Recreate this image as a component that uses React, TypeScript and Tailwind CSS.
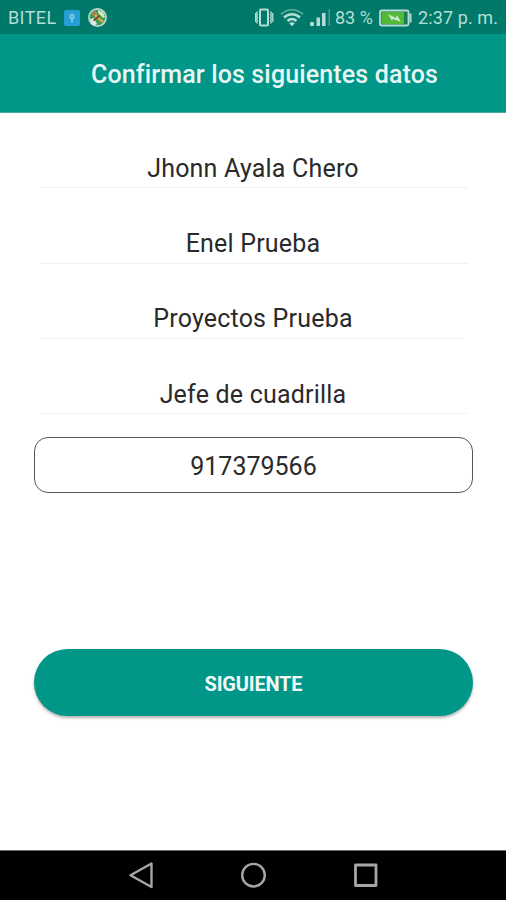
import React from 'react';

const details = [
  { id: 'name', value: 'Jhonn Ayala Chero', line: 'w-[428px]' },
  { id: 'company', value: 'Enel Prueba', line: 'w-[428px]' },
  { id: 'project', value: 'Proyectos Prueba', line: 'w-[424px]' },
  { id: 'role', value: 'Jefe de cuadrilla', line: 'w-[428px]' },
];

const StatusBar = () => (
  <div className="flex h-[34px] shrink-0 items-center bg-[#00796a] pl-2 pr-[7px] pt-px text-[18px] text-[#b5ddd5]">
    <span className="w-[56px] shrink-0 tracking-[0.4px]">BITEL</span>
    <svg className="h-4 w-4 shrink-0" viewBox="0 0 16 16" fill="none">
      <rect width="16" height="16" rx="2" fill="#249ed2" />
      <circle cx="8" cy="6.5" r="2.3" fill="#55b9df" stroke="#8ed7ec" />
      <path d="M8 8.5v4" stroke="#8ed7ec" strokeWidth="1.5" />
    </svg>
    <svg className="ml-2 h-[19px] w-[19px] shrink-0" viewBox="0 0 19 19" fill="none">
      <circle cx="9.5" cy="9.5" r="8.6" fill="#3f9a55" stroke="#b9d8cf" strokeWidth="1.7" />
      <path d="M2 11l4-1 3 6-3 1.5-3-2z" fill="#dcebe2" />
      <path d="M10 2l5 2 2 5-2 1-5-5z" fill="#d3e5c4" />
      <path d="M4 5.5l3-2.5 3 5 6 5-1.5 2-6-4z" fill="#c9a850" />
      <path d="M5.5 12.5l6.5-5" stroke="#7c4a2c" strokeWidth="1.8" />
      <circle cx="6.5" cy="5.5" r="1.2" fill="#c4533a" />
    </svg>

    <div className="ml-auto flex shrink-0 items-center">
      {/* vibrate */}
      <svg className="h-[19px] w-5" viewBox="0 0 20 19" fill="none" stroke="#b5ddd5">
        <rect x="5" y="1.5" width="8" height="16" rx="1" strokeWidth="2" />
        <path d="M2.5 3.5l-1 1.5 1 1.5-1 1.5 1 1.5-1 1.5 1 1.5-1 1.5 1 1.5M.6 5v9M15.5 3.5l1 1.5-1 1.5 1 1.5-1 1.5 1 1.5-1 1.5 1 1.5-1 1.5M17.8 5v9" strokeWidth="1.3" />
      </svg>
      {/* wifi */}
      <svg className="ml-[5px] h-[19px] w-6" viewBox="0 0 24 19" fill="none" stroke="#b5ddd5" strokeWidth="2.4">
        <path d="M1 6.5C7.5.2 16.5.2 23 6.5" stroke="#5eaa9d" strokeWidth="1.6" />
        <path d="M4 9.5c4.8-4.4 11.2-4.4 16 0M7.5 13c2.8-2.4 6.2-2.4 9 0" />
        <path d="M12 18.2l-2.8-3c1.6-1.2 4-1.2 5.6 0z" fill="#b5ddd5" stroke="none" />
      </svg>
      {/* signal */}
      <svg className="ml-[6px] h-[19px] w-[22px]" viewBox="0 0 22 19" fill="#b5ddd5">
        <rect x="0" y="14" width="4" height="4" rx="1" />
        <rect x="6.5" y="9.5" width="3.5" height="8.5" />
        <rect x="12" y="5" width="3.5" height="13" />
        <rect x="18.5" y="1" width="1.5" height="17" fill="#4a9c8f" />
      </svg>
      <span className="ml-[3px] w-[44px] whitespace-nowrap">83 %</span>
      <svg className="h-[18px] w-[33px]" viewBox="0 0 33 18" fill="none">
        <rect x="1" y="1.5" width="28.5" height="15" rx="1.5" fill="#177d55" stroke="#b5ddd5" strokeWidth="1.8" />
        <rect x="2.5" y="3" width="22.5" height="12" fill="#52b936" />
        <path d="M31.5 4.5v9" stroke="#b5ddd5" strokeWidth="2" />
        <path d="M9 5l8 4 1-3 4 7-8-3-1 2z" fill="#c5e9cd" />
      </svg>
      <span className="ml-[6px] w-[81px] whitespace-nowrap tracking-[0.1px]">2:37 p. m.</span>
    </div>
  </div>
);

const NavigationBar = () => (
  <nav className="flex h-[50px] shrink-0 items-center justify-center gap-[85px] border-t border-[#6b6b6b] bg-black">
    <svg className="h-7 w-7" viewBox="0 0 28 28" fill="none" stroke="#a6a6a6" strokeWidth="2.4" strokeLinejoin="round">
      <path d="M25.5 1.5V25l-21-11.8z" />
    </svg>
    <svg className="h-7 w-7" viewBox="0 0 28 28" fill="none" stroke="#a6a6a6" strokeWidth="2.4">
      <circle cx="14.5" cy="13.2" r="11.3" />
    </svg>
    <svg className="h-7 w-7" viewBox="0 0 28 28" fill="none" stroke="#a6a6a6" strokeWidth="2.8" strokeLinejoin="round">
      <rect x="3.5" y="3" width="20.5" height="20.5" />
    </svg>
  </nav>
);

const App = () => {
  return (
    <div className="flex h-[900px] w-[506px] flex-col overflow-hidden bg-white font-['Roboto',sans-serif]">
      <StatusBar />
      <header className="flex h-[79px] shrink-0 items-center border-b border-[#46aa9f] bg-[#009688] pl-[91px] pt-[4px]">
        <h1 className="whitespace-nowrap text-[25px] font-medium tracking-[0.14px] text-[#e6f6f4]">Confirmar los siguientes datos</h1>
      </header>

      <main className="flex flex-1 flex-col px-[34px]">
        <div className="text-[25px] leading-[30px] tracking-[0.2px] text-[#2a2a2a]">
          {details.map((item) => (
            <div key={item.id} className="flex h-[75.3px] flex-col justify-end text-center">
              <p>{item.value}</p>
              <div className={`ml-[6px] mt-[3.5px] h-px bg-[#f2f2f2] ${item.line}`} />
            </div>
          ))}
        </div>

        <input
          type="tel"
          defaultValue="917379566"
          className="mt-[23px] h-14 w-[439px] shrink-0 rounded-[14px] border border-[#555555] bg-white pt-[3px] text-center text-[25px] text-[#2a2a2a] outline-none"
        />

        <button className="mt-[156px] h-[67px] w-[439px] shrink-0 rounded-full bg-[#009688] pt-[2px] text-[20px] font-bold tracking-[-0.2px] text-[#effaf8] shadow-[0_2px_3px_rgba(0,0,0,0.3)]">
          SIGUIENTE
        </button>
      </main>

      <NavigationBar />
    </div>
  );
};

export default App;
